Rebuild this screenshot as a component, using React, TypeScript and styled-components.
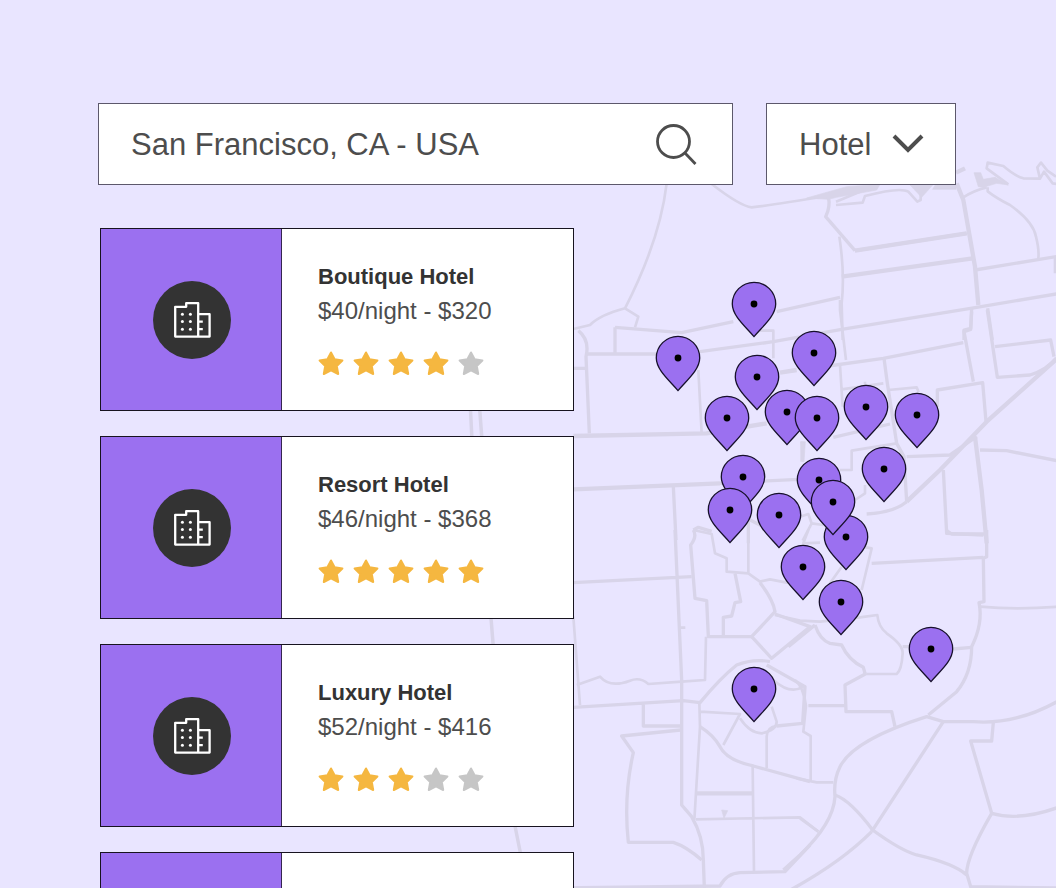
import React from "react";
import styled, { createGlobalStyle } from "styled-components";

const GlobalStyle = createGlobalStyle`
  *, *::before, *::after { box-sizing: border-box; }
  body {
    margin: 0;
    background: #e9e5ff;
    font-family: "Liberation Sans", Arial, Helvetica, sans-serif;
    color: #4d4d4d;
  }
`;

const Page = styled.div`
  position: relative;
  height: 100vh;
  overflow: hidden;
`;

const MapLayer = styled.section`
  position: absolute;
  top: 0;
  left: 0;
  width: 100%;
  aspect-ratio: 1056 / 888;
`;

const Roads = styled.svg`
  display: block;
  width: 100%;
  height: 100%;
  fill: none;
  stroke: #d8d4e9;
  stroke-width: 10;
  stroke-linejoin: round;

  .wide { stroke-width: 13; }
  .thin { stroke-width: 8; }
  .solid { fill: #d8d4e9; stroke-width: 2; }
`;

const PinButton = styled.button<{ $x: number; $y: number }>`
  position: absolute;
  left: ${({ $x }) => ($x / 1056) * 100}%;
  top: ${({ $y }) => ($y / 888) * 100}%;
  width: 46px;
  height: 58px;
  margin: -23px 0 0 -23px;
  padding: 0;
  border: 0;
  background: none;
  cursor: pointer;

  svg { display: block; }
`;

const Content = styled.main`
  position: relative;
  display: flex;
  flex-direction: column;
  gap: 43px;
  padding: 103px 100px 0 98px;
  pointer-events: none;

  & > * > * { pointer-events: auto; }
`;

const Toolbar = styled.form`
  display: flex;
  gap: 33px;
`;

const SearchField = styled.div`
  display: flex;
  flex: 1;
  align-items: center;
  min-width: 0;
  height: 82px;
  padding: 2px 31px 0 32px;
  border: 1px solid #5c586b;
  background: #fff;
`;

const SearchInput = styled.input`
  flex: 1;
  min-width: 0;
  height: 100%;
  padding: 0;
  border: 0;
  outline: 0;
  background: none;
  color: inherit;
  font: 31px/40px "Liberation Sans", Arial, sans-serif;
`;

const SearchButton = styled.button`
  display: flex;
  padding: 0;
  border: 0;
  background: none;
  color: inherit;
  cursor: pointer;
`;

const TypeField = styled.div`
  display: grid;
  grid-template-columns: 1fr;
  align-items: center;
  width: 190px;
  height: 82px;
  border: 1px solid #5c586b;
  background: #fff;

  & > * { grid-area: 1 / 1; }

  svg {
    justify-self: end;
    margin-right: 30px;
    pointer-events: none;
  }
`;

const TypeSelect = styled.select`
  width: 100%;
  height: 100%;
  padding: 2px 64px 0 32px;
  border: 0;
  outline: 0;
  appearance: none;
  background: none;
  color: inherit;
  font: 31px/40px "Liberation Sans", Arial, sans-serif;
`;

const HotelList = styled.ul`
  display: flex;
  flex-direction: column;
  gap: 25px;
  max-width: 478px;
  margin: 0;
  padding: 0 2px;
  list-style: none;
`;

const HotelCard = styled.li`
  display: grid;
  grid-template-columns: 181px 1fr;
  min-height: 183px;
  border: 1px solid #17131f;
  background: #fff;
`;

const Thumb = styled.div`
  display: grid;
  place-items: center;
  padding-left: 2px;
  border-right: 1px solid #352650;
  background: #9b70f0;
`;

const Badge = styled.span`
  display: grid;
  place-items: center;
  width: 78px;
  height: 78px;
  border-radius: 50%;
  background: #333;
`;

const Details = styled.div`
  display: flex;
  flex-direction: column;
  justify-content: center;
  padding: 0 36px 2px;
`;

const HotelName = styled.h2`
  margin: 0;
  color: #333;
  font-size: 22px;
  font-weight: 700;
  line-height: 34px;
`;

const Price = styled.p`
  margin: 0;
  font-size: 24px;
  line-height: 34px;
`;

const Rating = styled.div`
  display: flex;
  gap: 9px;
  margin-top: 23px;
`;

const Star = styled.svg<{ $on: boolean }>`
  width: 26px;
  height: 26px;
  fill: ${({ $on }) => ($on ? "#f5b740" : "#c6c6c6")};
  stroke: ${({ $on }) => ($on ? "#f5b740" : "#c6c6c6")};
  stroke-width: 2;
  stroke-linejoin: round;
`;

const hotels = [
  { name: "Boutique Hotel", price: "$40/night - $320", stars: 4 },
  { name: "Resort Hotel", price: "$46/night - $368", stars: 5 },
  { name: "Luxury Hotel", price: "$52/night - $416", stars: 3 },
  { name: "", price: "", stars: 0 },
];

const pins: [number, number][] = [
  [754, 304], [678, 358], [814, 353], [757, 377], [727, 418], [787, 412],
  [817, 418], [866, 407], [917, 415], [884, 469], [743, 477], [730, 510],
  [779, 515], [819, 480], [846, 537], [833, 502], [803, 567], [841, 602],
  [931, 649], [754, 689],
];

function BuildingIcon() {
  return (
    <svg width="38" height="38" viewBox="0 0 38 38" fill="none" stroke="#fff" strokeWidth="2.3" strokeLinejoin="round" aria-hidden="true">
      <path d="M2.2 35.6V5.8h11V2.2h12V35.6ZM25.2 13.2h11.4V35.6H25.2" />
      <path d="M25.6 20.6h4.2M25.6 28.2h4.2" />
      <g fill="#fff" stroke="none">
        <circle cx="9.4" cy="13.2" r="1.5" />
        <circle cx="17.4" cy="13.2" r="1.5" />
        <circle cx="9.4" cy="20.6" r="1.5" />
        <circle cx="17.4" cy="20.6" r="1.5" />
        <circle cx="9.4" cy="28.2" r="1.5" />
        <circle cx="17.4" cy="28.2" r="1.5" />
      </g>
    </svg>
  );
}

function Pin({ x, y }: { x: number; y: number }) {
  return (
    <PinButton type="button" $x={x} $y={y} aria-label="Show hotel">
      <svg width="46" height="58" viewBox="0 0 46 58" aria-hidden="true">
        <path d="M1.3 23A21.7 21.7 0 0 1 44.7 23C44.7 35 31 46 23 55.6C15 46 1.3 35 1.3 23Z" fill="#9b70f0" stroke="#17102b" strokeWidth="1.3" />
        <circle cx="23" cy="23" r="3.4" fill="#000" />
      </svg>
    </PinButton>
  );
}

function RoadMap() {
  return (
    <Roads viewBox="0 0 1056 888" preserveAspectRatio="xMinYMin meet" aria-hidden="true">
      {/* Ocean shore, seen between the cards */}
      <path d="M470 400L472 440M479 400L482 440C485 500 487 560 491 618L493 643C500 720 508 780 515 826L521 856" strokeWidth="3.5" />
      {/* Presidio and the northern waterfront */}
      <g transform="translate(560 90) scale(.33333)">
        <path className="thin" d="M320 280Q300 450 195 655l40 25-10 32M195 655Q120 675 90 705L40 717M455 282Q540 348 575 352Q640 345 800 318" />
        <path className="solid" d="M740 324L860 290L960 283L950 300L830 322L805 328Z" />
        <path d="M805 320Q812 350 797 380L885 482M885 482L1220 430" />
        <path className="wide" d="M885 482L1220 430M845 560L1238 505" />
        <path className="thin" d="M828 335L905 303M828 345L908 338L915 318Q1020 290 1045 305L1072 335L1082 330V290" />
        <path className="solid" d="M1050 285H1118L1085 322ZM1125 286L1188 280V298H1118ZM1242 248H1262L1270 268L1305 262L1345 285L1310 280L1270 292L1255 290Z" />
        <path className="wide" d="M1190 280L1210 330L1245 530L1255 645M1188 248L1215 235" />
        <path className="thin" d="M1210 322Q1240 302 1280 292M1345 283L1280 235L1283 218L1330 228Q1365 258 1390 265L1440 266L1432 232L1443 218L1462 242L1488 260M1440 266L1452 245L1478 280L1500 284" />
        <path className="thin" d="M1283 292V304Q1310 325 1350 345Q1420 395 1428 440Q1438 480 1435 505M1485 500V550M838 440Q855 550 845 640L848 750" />
        <path d="M1245 540L1500 498M650 665L840 622M165 712L365 728L520 695M845 718L1250 652L1500 610" />
        <path d="M1235 655L1232 715L1212 720V750M1283 655L1297 750" />
      </g>
      {/* Richmond */}
      <g transform="translate(560 290) scale(.33333)">
        <path d="M55 122Q90 150 78 200L88 430M40 235H75M78 192H285L420 185L640 155L845 118M165 192V112" />
        <path className="thin" d="M600 122H640V205M415 240L425 430" />
        <path className="wide" d="M660 248L710 240M40 438L440 430L620 400M40 598L480 580" />
        <path d="M480 580L715 568L800 572M340 590L348 750M565 690V760M560 685L610 710" />
        <path className="solid" d="M722 455H736L732 515H728Z" />
        <path d="M400 720L415 712L455 724" />
      </g>
      {/* Downtown and Mission */}
      <g transform="translate(800 290) scale(.33333)">
        <path className="thin" d="M120 30V60L138 210M120 225L128 350M125 298L250 280M265 300L350 292l6 15M195 275v20" />
        <path d="M85 228L250 205L490 158M515 65L512 118L492 125L520 275M562 60L592 262L690 255Q740 240 768 205M585 170L752 150L762 200" />
        <path className="wide" d="M780 198L560 395L420 540L320 635M525 440L545 600L560 760" />
        <path d="M320 635Q280 668 200 672M412 350V300L548 278L558 395M252 205L262 280L290 460L312 500L320 635M320 500L450 495L530 440" />
        <path d="M100 442L270 402M540 480L620 482L780 514M430 540L440 730L550 735" />
        <path className="thin" d="M120 540H155V482L290 460M165 630L195 610V585M0 680L25 672L35 700L70 705M35 700L8 752M5 455V515" />
      </g>
      {/* Sunset and Twin Peaks */}
      <g transform="translate(560 530) scale(.33333)">
        <path d="M345 0L365 450V825L395 860Q430 920 430 990L433 1074M40 158L395 140" />
        <path d="M400 0Q412 20 392 45L405 205L440 212L445 320H575L645 245Q640 210 600 158" />
        <path className="thin" d="M400 0L455 12L465 70L500 85V125L565 130V0M565 130L600 155L630 148L680 158L750 130" />
        <path d="M525 130L542 215L525 218L515 258L490 262V320M575 320L635 385L750 290L645 252" />
        <path className="thin" d="M360 293h16M438 320L435 450L365 455L265 462Q240 440 210 452Q150 475 120 440L50 465M40 260L60 525" />
        <path d="M40 532L370 512L420 518Q480 445 530 405Q580 385 630 395M250 522V588H362" />
        <path d="M362 600L185 618L220 668Q190 800 205 937H340Q380 950 425 990" />
        <path className="thin" d="M418 518L420 590L403 870M420 545L540 552L490 645M540 565Q570 610 605 610Q650 600 650 575L635 530" />
        <path d="M420 590Q460 615 480 650Q500 690 580 708L750 755M650 588L728 580L735 470L620 405" />
        <path className="thin" d="M640 450Q690 495 730 470M620 715V620Q622 590 650 588M578 710L582 1025M408 868L720 862L775 905" />
        <path className="wide" d="M408 790H578" />
        <path className="solid" d="M485 840L503 842L492 865Z" />
        <path d="M0 1074L480 1068Q500 1030 540 1028L675 1025L750 945" />
      </g>
      {/* Castro, Noe Valley and Potrero */}
      <g transform="translate(800 530) scale(.33333)">
        <path d="M560 0V80L550 85L552 215L537 218Q550 280 515 350Q515 430 470 485L385 555M438 0L455 12H560M215 100L550 82" />
        <path className="thin" d="M25 0L10 40L60 38M185 50L215 55L185 180M125 110L90 160M540 230Q650 240 780 230" />
        <path className="thin" d="M-75 255L0 272L60 275L180 262L232 255Q235 290 260 310Q310 345 308 370Q305 420 290 432H200" />
        <path d="M200 430L135 465L138 545H275L285 590M-35 350L45 285M460 357L515 352M308 350h20" />
        <path d="M45 285Q60 330 90 340L125 345Q145 390 190 412L195 430" />
        <path className="thin" d="M-15 450Q10 470 18 527L10 605L32 618V755M-10 745L50 757H100M0 865L55 905" />
        <path d="M25 527H135M780 510Q650 585 520 575H430L380 560Q160 630 120 710Q100 750 105 800Q100 880 0 975L-50 1020" />
        <path d="M430 575L215 905M580 577L575 633H512L575 850Q660 875 780 830M575 850Q500 980 500 1030L512 1070L780 1074" />
        <path d="M105 795Q150 810 218 900Q300 960 350 975Q460 1000 500 1035M-40 1086Q120 1000 215 905" />
      </g>
    </Roads>
  );
}

export default function App() {
  return (
    <Page>
      <GlobalStyle />
      <MapLayer aria-label="Hotel map">
        <RoadMap />
        {pins.map(([x, y]) => (
          <Pin key={`${x}-${y}`} x={x} y={y} />
        ))}
      </MapLayer>
      <Content>
        <Toolbar onSubmit={(e) => e.preventDefault()}>
          <SearchField>
            <SearchInput aria-label="Location" defaultValue="San Francisco, CA - USA" />
            <SearchButton type="submit" aria-label="Search">
              <svg width="46" height="46" viewBox="0 0 46 46" fill="none" stroke="currentColor" strokeWidth="2.8" aria-hidden="true">
                <circle cx="18.5" cy="19.5" r="16" />
                <path d="M29.5 30.5L40.5 42" />
              </svg>
            </SearchButton>
          </SearchField>
          <TypeField>
            <TypeSelect aria-label="Property type" defaultValue="Hotel">
              <option>Hotel</option>
            </TypeSelect>
            <svg width="34" height="20" viewBox="0 0 34 20" fill="none" stroke="currentColor" strokeWidth="4" aria-hidden="true">
              <path d="M3 2L17 16L31 2" />
            </svg>
          </TypeField>
        </Toolbar>
        <HotelList>
          {hotels.map((hotel, i) => (
            <HotelCard key={i}>
              <Thumb>
                {hotel.name && (
                  <Badge>
                    <BuildingIcon />
                  </Badge>
                )}
              </Thumb>
              {hotel.name && (
                <Details>
                  <HotelName>{hotel.name}</HotelName>
                  <Price>{hotel.price}</Price>
                  <Rating role="img" aria-label={`${hotel.stars} out of 5 stars`}>
                    {[1, 2, 3, 4, 5].map((n) => (
                      <Star key={n} $on={n <= hotel.stars} viewBox="0 0 26 26">
                        <path d="M13 1.5L16.6 8.3L24.4 9.5L18.8 15L20.2 23L13 19.3L5.8 23L7.2 15L1.6 9.5L9.4 8.3Z" />
                      </Star>
                    ))}
                  </Rating>
                </Details>
              )}
            </HotelCard>
          ))}
        </HotelList>
      </Content>
    </Page>
  );
}
